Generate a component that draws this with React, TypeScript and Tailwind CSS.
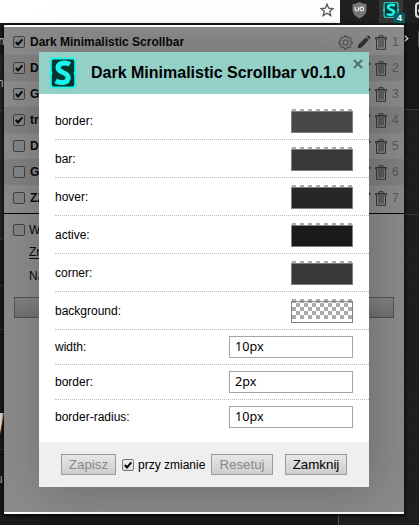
import React from "react";

function Check({ on = false, light = false }: { on?: boolean; light?: boolean }) {
  return (
    <span
      className={`block h-3 w-3 shrink-0 rounded-[2px] border ${
        light ? "border-[#777] bg-linear-to-b from-[#f0f0f0] to-[#dcdcdc]" : "border-[#424242] bg-[#858585]"
      }`}
    >
      {on && (
        <svg viewBox="0 0 10 10" className="block h-[10px] w-[10px]">
          <path d="M1.8 5 L4 7.4 L8.3 2.3" fill="none" stroke="#080808" strokeWidth="2" />
        </svg>
      )}
    </span>
  );
}

function Logo({ className }: { className: string }) {
  return (
    <svg viewBox="0 0 28 32" preserveAspectRatio="none" className={className}>
      <path d="M3 .5H25L27 3V13.5L28 16L27 18.5V29L25 31.5H3L1 29V18.5L0 16L1 13.5V3Z" fill="#19f5ec" />
      <path d="M4 2.5H24L25.2 4V13.5L24.5 16L25.2 18.5V28L24 29.5H4L2.8 28V18.5L3.5 16L2.8 13.5V4Z" fill="#04352f" />
      <path
        d="M20.8 7.4C17.5 5.4 9 5 9 10.6C9 16.3 19.2 14.6 19.2 20.6C19.2 26.8 11 26.3 6.6 24"
        fill="none"
        stroke="#19f5ec"
        strokeWidth="5"
      />
    </svg>
  );
}

function Trash() {
  return (
    <svg viewBox="0 0 12 15" className="h-[15px] w-3 shrink-0" fill="none" stroke="#353535">
      <path d="M.5 2.5H11.5V4H.5ZM4 2.5V.7H8V2.5M1.5 4V14.3H10.5V4M4 5V12.5M6 5V12.5M8 5V12.5" />
    </svg>
  );
}

function Pencil() {
  return (
    <svg viewBox="0 0 14 14" className="h-[14px] w-[14px] shrink-0">
      <path d="M.5 13.5L1.5 9.5L9 2.2L11.8 5L4.5 12.4ZM9.8 1.5L10.6.7Q11.2.2 11.8.7L13.3 2.2Q13.8 2.8 13.3 3.4L12.5 4.2Z" fill="#303030" />
    </svg>
  );
}

function Gear() {
  return (
    <svg viewBox="0 0 16 16" className="h-[15px] w-[15px] shrink-0" fill="none" stroke="#404040">
      <path d="M6.8 1H9.2L9.6 2.8L10.8 3.3L12.4 2.3L13.8 3.8L12.8 5.3L13.3 6.5L15 6.9V9.1L13.3 9.5L12.8 10.7L13.8 12.2L12.3 13.7L10.8 12.7L9.6 13.2L9.2 15H6.8L6.4 13.2L5.2 12.7L3.7 13.7L2.2 12.2L3.2 10.7L2.7 9.5L1 9.1V6.9L2.7 6.5L3.2 5.3L2.2 3.8L3.7 2.3L5.2 3.3L6.4 2.8Z" />
      <circle cx="8" cy="8" r="2.8" />
    </svg>
  );
}

const styles = [
  { name: "Dark Minimalistic Scrollbar", on: true },
  { name: "D", on: true },
  { name: "G", on: true },
  { name: "tr", on: true },
  { name: "D", on: false },
  { name: "G", on: false },
  { name: "ZZ", on: false },
];

const colors = [
  { label: "border:", color: "bg-[#484848]" },
  { label: "bar:", color: "bg-[#383838]" },
  { label: "hover:", color: "bg-[#272727]" },
  { label: "active:", color: "bg-[#191919]" },
  { label: "corner:", color: "bg-[#383838]" },
  { label: "background:", color: "" },
];

const sizes = [
  { label: "width:", value: "10px" },
  { label: "border:", value: "2px" },
  { label: "border-radius:", value: "10px" },
];

function Swatch({ color }: { color: string }) {
  return (
    <div className="relative mr-4 mt-px h-[22px] w-[62px]">
      <div className="absolute -top-0.5 left-px h-5 w-[60px] bg-[conic-gradient(#aaa_25%,#fff_0_50%,#aaa_0_75%,#fff_0)] bg-[length:8px_8px] bg-[position:4px_0px]" />
      <div className={`absolute inset-0 border border-[#808080] ${color}`} />
    </div>
  );
}

const button =
  "box-border flex h-[21px] items-center justify-center border border-[#999] bg-linear-to-b from-[#e6e6e6] to-[#cecece] text-[13.33px] leading-none";

function Dialog() {
  return (
    <div className="absolute left-[39px] top-[52px] flex h-[435px] w-[330px] flex-col bg-white text-[12px] text-black shadow-[5px_5px_50px_rgba(0,0,0,0.22)]">
      <header className="relative flex h-[42px] shrink-0 items-center bg-[#92d0c8] pl-[10px]">
        <Logo className="h-8 w-7" />
        <h1 className="ml-[14px] whitespace-nowrap text-[16px] font-bold leading-none">Dark Minimalistic Scrollbar v0.1.0</h1>
        <svg viewBox="0 0 10 10" className="absolute right-[6px] top-[7px] h-[10px] w-[10px]">
          <path d="M1 1L9 9M9 1L1 9" stroke="#526e6b" strokeWidth="2" />
        </svg>
      </header>
      <div className="flex-1 pl-4 pt-2">
        {colors.map((c) => (
          <div key={c.label} className="flex h-[38px] items-center justify-between border-b border-dotted border-[#bbb] pt-px">
            <span>{c.label}</span>
            <Swatch color={c.color} />
          </div>
        ))}
        {sizes.map((s, i) => (
          <div
            key={s.label}
            className={`flex h-[35px] items-center justify-between ${i < 2 ? "border-b border-dotted border-[#bbb]" : "pb-px"}`}
          >
            <span>{s.label}</span>
            <span className="mr-4 flex h-[22px] w-[124px] items-center border border-[#a5a5a5] pl-[5px] font-['Noto_Sans',sans-serif] text-[12.6px] leading-none">
              {s.value}
            </span>
          </div>
        ))}
      </div>
      <footer className="flex h-[45px] shrink-0 items-center bg-[#efefef] pl-[22px]">
        <button className={`${button} w-[55px] text-[#888]`}>Zapisz</button>
        <span className="ml-[6px]">
          <Check on light />
        </span>
        <span className="ml-1 w-[67px] whitespace-nowrap">przy zmianie</span>
        <button className={`${button} ml-[6px] w-[62px] text-[#888]`}>Resetuj</button>
        <button className={`${button} ml-3 w-[62px] text-black`}>Zamknij</button>
      </footer>
    </div>
  );
}

function Toolbar() {
  return (
    <div className="flex h-[23px] overflow-hidden bg-[#1f1f1f]">
      <div className="flex w-[340px] shrink-0 justify-end bg-white pr-[6px] pt-[3px]">
        <svg viewBox="0 0 14 14" className="h-[14px] w-[14px]">
          <path d="M7 1.2L8.7 5.2L13 5.5L9.7 8.3L10.8 12.6L7 10.3L3.2 12.6L4.3 8.3L1 5.5L5.3 5.2Z" fill="none" stroke="#555" strokeWidth="1.3" />
        </svg>
      </div>
      <div className="w-[39px] shrink-0 pl-3 pt-0.5">
        <svg viewBox="0 0 15 17" className="h-[17px] w-[15px]">
          <path d="M7.5 0Q11 2 14.5 2.3V8Q14.5 13 7.5 16.5Q.5 13 .5 8V2.3Q4 2 7.5 0Z" fill="#777" />
          <path d="M3.2 5V7.5Q3.2 9 4.8 9T6.5 7.5V5" fill="none" stroke="#eee" strokeWidth="1.2" />
          <circle cx="9.8" cy="7" r="1.8" fill="none" stroke="#eee" strokeWidth="1.2" />
        </svg>
      </div>
      <div className="relative w-6 shrink-0 bg-[#353535] pl-1 pt-0.5">
        <Logo className="h-4 w-4" />
        <span className="absolute -right-[2px] top-[13px] flex h-[11px] w-[11px] items-center justify-center rounded-[1px] bg-[#006363] text-[9px] font-bold leading-none text-white">
          4
        </span>
      </div>
      <div className="ml-3 mt-0.5 h-4 w-2 shrink-0 rounded-l-[4px] border-2 border-r-0 border-[#ddd] bg-[#222] pt-[5px]">
        <div className="ml-px h-[3px] w-[3px] rounded-full bg-white" />
      </div>
    </div>
  );
}

function Popup() {
  return (
    <div className="absolute left-1 top-[25px] h-[489px] w-[400px] overflow-hidden rounded-[1px] border-y-2 border-white bg-[#8b8b8b] text-[12px] text-[#090909] shadow-[0_1px_4px_#000]">
      <div className="flex h-[187px] flex-col border-b border-black">
        {styles.map((s, i) => (
          <div
            key={i}
            className={`flex shrink-0 items-center pl-[9px] pr-[5px] ${i === 0 ? "h-7 pt-[2px]" : i === 6 ? "h-[28px] pb-[2px]" : "h-[26px]"} ${
              i % 2 ? "bg-[#808080]" : "bg-[#8b8b8b]"
            }`}
          >
            <Check on={s.on} />
            <span className="ml-[5px] flex-1 whitespace-nowrap font-bold">{s.name}</span>
            {i === 0 && <Gear />}
            <span className="ml-1">
              <Pencil />
            </span>
            <span className="ml-1">
              <Trash />
            </span>
            <span className="ml-[5px] w-[7px] text-[#585858]">{i + 1}</span>
          </div>
        ))}
      </div>
      <div className="pl-[9px] pt-[10px]">
        <div className="flex h-3 items-center">
          <Check />
          <span className="ml-1">W</span>
        </div>
        <div className="ml-4 mt-[9px] h-[15px] leading-[15px] underline underline-offset-2">Zm</div>
        <div className="ml-4 mt-[9px] h-[15px] leading-[15px]">Na</div>
      </div>
      <div className="ml-[10px] mt-[13px] h-[21px] w-[380px] border border-[#505050] bg-linear-to-b from-[#858585] to-[#707070]" />
    </div>
  );
}

export default function App() {
  return (
    <main className="relative h-[525px] w-[419px] overflow-hidden bg-[#181818] font-['Liberation_Sans',Arial,sans-serif]">
      <Toolbar />
      <div className="flex h-[502px] justify-between">
        <div className="relative w-10 bg-[#1a1a1a]">
          <div className="absolute left-0 top-[30px] h-[187px] w-1 border-b border-[#353535] bg-[#262525]" />
          <div className="absolute left-0 top-[87px] h-px w-1 bg-[#3a3a3a]" />
          <div className="absolute left-0 top-[262px] h-[45px] w-1 border-y border-[#353535]" />
          <div className="absolute left-0 top-[426px] h-px w-1 bg-[#353535]" />
          <span className="absolute -left-[6px] top-[8px] text-[13px] text-white">m</span>
          <span className="absolute -left-[7px] top-[50px] text-[13px] text-[#ccc]">m</span>
          <span className="absolute -left-[5px] top-[379px] text-[30px] font-bold italic text-[#ddd]">l</span>
          <span className="absolute -left-1 top-[447px] text-[12px] text-[#aaa]">u</span>
        </div>
        <div className="relative w-[81px] border-l border-[#555] bg-[#1e1e1e] bg-[repeating-linear-gradient(45deg,#222_0px,#222_1px,transparent_1px,transparent_6px)]">
          <div className="absolute right-0 top-0 h-[87px] w-4 border-b border-[#3a3a3a] bg-[#181818]" />
          <div className="absolute right-0 top-[191px] h-px w-4 bg-[#393939]" />
          <div className="absolute right-0 top-[8px] h-4 w-px bg-[#555]" />
          <svg viewBox="0 0 5 7" className="absolute right-[10px] top-[12px] h-[7px] w-[5px]">
            <path d="M.7.7L3.7 3.5L.7 6.3" fill="none" stroke="#ddd" strokeWidth="1.5" />
          </svg>
        </div>
      </div>
      <Popup />
      <Dialog />
    </main>
  );
}
